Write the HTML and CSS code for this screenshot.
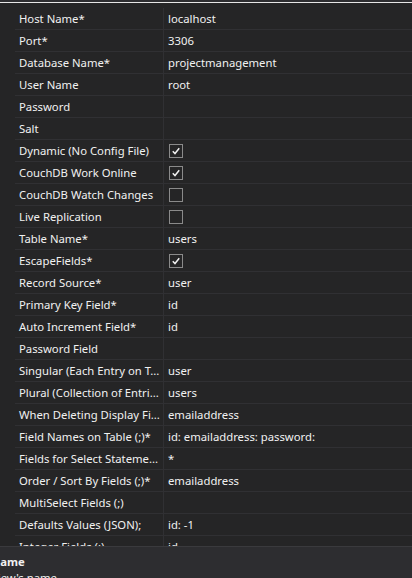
FILE: index.html
```html
<!DOCTYPE html>
<html>
<head>
<meta charset="utf-8">
<link rel="stylesheet" href="styles.css">
</head>
<body>
<div class="app">
  <div class="topbar"></div>
  <div class="grid">
    <div class="row"><div class="gut"></div><div class="lbl">Host Name*</div><div class="val">localhost</div></div>
    <div class="row"><div class="gut"></div><div class="lbl">Port*</div><div class="val">3306</div></div>
    <div class="row"><div class="gut"></div><div class="lbl">Database Name*</div><div class="val">projectmanagement</div></div>
    <div class="row"><div class="gut"></div><div class="lbl">User Name</div><div class="val">root</div></div>
    <div class="row"><div class="gut"></div><div class="lbl">Password</div><div class="val"></div></div>
    <div class="row"><div class="gut"></div><div class="lbl">Salt</div><div class="val"></div></div>
    <div class="row"><div class="gut"></div><div class="lbl">Dynamic (No Config File)</div><div class="val"><span class="cb on"><svg viewBox="0 0 13 13"><path d="M3 6.8 L5.4 9.3 L10 3.6"/></svg></span></div></div>
    <div class="row"><div class="gut"></div><div class="lbl">CouchDB Work Online</div><div class="val"><span class="cb on"><svg viewBox="0 0 13 13"><path d="M3 6.8 L5.4 9.3 L10 3.6"/></svg></span></div></div>
    <div class="row"><div class="gut"></div><div class="lbl">CouchDB Watch Changes</div><div class="val"><span class="cb"></span></div></div>
    <div class="row"><div class="gut"></div><div class="lbl">Live Replication</div><div class="val"><span class="cb"></span></div></div>
    <div class="row"><div class="gut"></div><div class="lbl">Table Name*</div><div class="val">users</div></div>
    <div class="row"><div class="gut"></div><div class="lbl">EscapeFields*</div><div class="val"><span class="cb on"><svg viewBox="0 0 13 13"><path d="M3 6.8 L5.4 9.3 L10 3.6"/></svg></span></div></div>
    <div class="row"><div class="gut"></div><div class="lbl">Record Source*</div><div class="val">user</div></div>
    <div class="row"><div class="gut"></div><div class="lbl">Primary Key Field*</div><div class="val">id</div></div>
    <div class="row"><div class="gut"></div><div class="lbl">Auto Increment Field*</div><div class="val">id</div></div>
    <div class="row"><div class="gut"></div><div class="lbl">Password Field</div><div class="val"></div></div>
    <div class="row"><div class="gut"></div><div class="lbl">Singular (Each Entry on T...</div><div class="val">user</div></div>
    <div class="row"><div class="gut"></div><div class="lbl">Plural (Collection of Entri...</div><div class="val">users</div></div>
    <div class="row"><div class="gut"></div><div class="lbl">When Deleting Display Fi...</div><div class="val">emailaddress</div></div>
    <div class="row"><div class="gut"></div><div class="lbl">Field Names on Table (;)*</div><div class="val">id: emailaddress: password:</div></div>
    <div class="row"><div class="gut"></div><div class="lbl">Fields for Select Stateme...</div><div class="val">*</div></div>
    <div class="row"><div class="gut"></div><div class="lbl">Order / Sort By Fields (;)*</div><div class="val">emailaddress</div></div>
    <div class="row"><div class="gut"></div><div class="lbl">MultiSelect Fields (;)</div><div class="val"></div></div>
    <div class="row"><div class="gut"></div><div class="lbl">Defaults Values (JSON);</div><div class="val">id: -1</div></div>
    <div class="row"><div class="gut"></div><div class="lbl">Integer Fields (;)</div><div class="val">id</div></div>
  </div>
  <div class="desc">
    <div class="desc-inner">
      <div class="desc-title">Name</div>
      <div class="desc-text">View's name</div>
    </div>
  </div>
</div>
</body>
</html>
```
FILE: styles.css
```css
html, body {
  margin: 0;
  padding: 0;
  background: #252526;
}
.app {
  width: 412px;
  height: 578px;
  overflow: hidden;
  display: flex;
  flex-direction: column;
  font-family: "Noto Sans", "Open Sans", sans-serif;
  font-size: 11.3px;
  color: #f1f1f1;
  background: #252526;
}
.topbar {
  height: 2px;
  border-bottom: 1px solid #e6e6e6;
  background: #2d2d30;
  margin-bottom: 5px;
  flex: none;
}
.grid {
  height: 538px;
  overflow: hidden;
  flex: none;
}
.row {
  display: grid;
  grid-template-columns: 15px 148px 1fr;
  height: 22px;
}
.gut {
  background: #252526;
}
.lbl, .val {
  border-bottom: 1px solid #303033;
  padding-left: 4px;
  padding-top: 1px;
  height: 20px;
  line-height: 20px;
  white-space: nowrap;
  overflow: hidden;
}
.val {
  border-left: 1px solid #303033;
  display: flex;
  align-items: center;
}
.cb {
  width: 12px;
  height: 12px;
  border: 1px solid #8a8a8a;
  display: inline-block;
  margin-left: 1px;
}
.cb svg {
  width: 12px;
  height: 12px;
  display: block;
  fill: none;
  stroke: #f1f1f1;
  stroke-width: 1.6;
}
.desc {
  flex: 1;
  background: #2d2d30;
  border-top: 1px solid #3a3a3d;
  overflow: hidden;
}
.desc-inner {
  margin-left: -9px;
  padding-top: 7px;
}
.desc-title {
  font-weight: bold;
  line-height: 16px;
}
.desc-text {
  line-height: 16px;
}
```
